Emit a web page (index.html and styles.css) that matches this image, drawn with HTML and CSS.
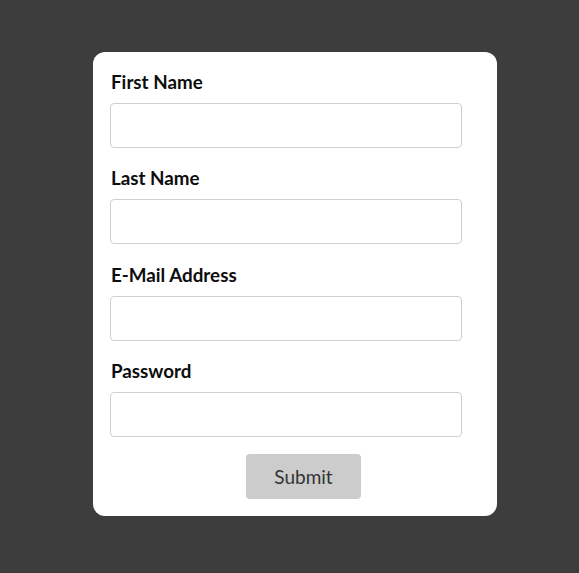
FILE: index.html
```html
<!DOCTYPE html>
<html lang="en">
<head>
<meta charset="utf-8">
<title>Form</title>
<link rel="stylesheet" href="styles.css">
</head>
<body>
<form class="card">
  <div class="field">
    <label class="label">First Name</label>
    <input class="input" type="text">
  </div>
  <div class="field">
    <label class="label">Last Name</label>
    <input class="input" type="text">
  </div>
  <div class="field">
    <label class="label">E-Mail Address</label>
    <input class="input" type="email">
  </div>
  <div class="field">
    <label class="label">Password</label>
    <input class="input" type="password">
  </div>
  <div class="actions">
    <button class="submit" type="button">Submit</button>
  </div>
</form>
</body>
</html>
```
FILE: styles.css
```css
html, body {
  margin: 0;
  padding: 0;
  background: #3d3d3d;
  height: 100%;
}
body {
  padding: 52px 0 0 93px;
  box-sizing: border-box;
  font-family: Lato, "Open Sans", sans-serif;
}
.card {
  width: 404px;
  box-sizing: border-box;
  background: #fff;
  border-radius: 12px;
  padding: 18px 17px 17px 17px;
  display: flex;
  flex-direction: column;
  gap: 18.3px;
}
.field {
  display: flex;
  flex-direction: column;
}
.label {
  font-size: 18.8px;
  line-height: 24px;
  font-weight: 700;
  color: #0d0d0d;
  margin: 0 0 9px 1px;
}
.input {
  width: 352px;
  height: 45px;
  box-sizing: border-box;
  border: 1px solid #cfcfcf;
  border-radius: 4px;
  background: #fff;
  margin: 0;
}
.actions {
  display: flex;
  padding-left: 136px;
  margin-top: -1px;
}
.submit {
  width: 115px;
  height: 45px;
  border: none;
  border-radius: 4px;
  background: #cccccc;
  color: #333;
  font-family: Lato, "Open Sans", sans-serif;
  font-size: 19px;
  padding: 0;
}
```
